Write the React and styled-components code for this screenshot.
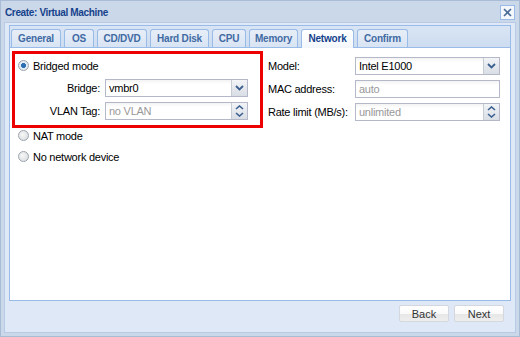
import React from "react";
import styled, { createGlobalStyle } from "styled-components";

const GlobalStyle = createGlobalStyle`
  html, body {
    margin: 0;
    padding: 0;
    width: 520px;
    height: 337px;
    overflow: hidden;
    font-family: "Liberation Sans", Arial, sans-serif;
  }
`;

const tabs = [
  { label: "General", w: 50 },
  { label: "OS", w: 30 },
  { label: "CD/DVD", w: 50 },
  { label: "Hard Disk", w: 59 },
  { label: "CPU", w: 34 },
  { label: "Memory", w: 49 },
  { label: "Network", w: 53 },
  { label: "Confirm", w: 51 },
];

const App = () => {
  return (
    <>
      <GlobalStyle />
      <Window>
        <Header>
          <Title>Create: Virtual Machine</Title>
          <CloseBtn>
            <svg width="11" height="11" viewBox="0 0 11 11">
              <path d="M2 2 L9 9 M9 2 L2 9" stroke="#4a6a96" strokeWidth="1.6" />
            </svg>
          </CloseBtn>
        </Header>
        <Body>
          <TabPanel>
            <TabBar>
              {tabs.map((t) => (
                <Tab key={t.label} $w={t.w} $active={t.label === "Network"}>
                  {t.label}
                </Tab>
              ))}
            </TabBar>
            <Content>
              <Column>
                <Highlight>
                  <RadioRow>
                    <Radio $checked />
                    Bridged mode
                  </RadioRow>
                  <FieldRow>
                    <LeftLabel>Bridge:</LeftLabel>
                    <Field $w={143}>
                      <FieldText>vmbr0</FieldText>
                      <ComboTrigger />
                    </Field>
                  </FieldRow>
                  <FieldRow>
                    <LeftLabel>VLAN Tag:</LeftLabel>
                    <Field $w={143}>
                      <FieldText $empty>no VLAN</FieldText>
                      <SpinTrigger />
                    </Field>
                  </FieldRow>
                </Highlight>
                <RadioRow $plain>
                  <Radio />
                  NAT mode
                </RadioRow>
                <RadioRow $plain>
                  <Radio />
                  No network device
                </RadioRow>
              </Column>
              <RightColumn>
                <FieldRow>
                  <RightLabel>Model:</RightLabel>
                  <Field $w={145}>
                    <FieldText>Intel E1000</FieldText>
                    <ComboTrigger />
                  </Field>
                </FieldRow>
                <FieldRow>
                  <RightLabel>MAC address:</RightLabel>
                  <Field $w={145}>
                    <FieldText $empty>auto</FieldText>
                  </Field>
                </FieldRow>
                <FieldRow>
                  <RightLabel>Rate limit (MB/s):</RightLabel>
                  <Field $w={145}>
                    <FieldText $empty>unlimited</FieldText>
                    <SpinTrigger />
                  </Field>
                </FieldRow>
              </RightColumn>
            </Content>
          </TabPanel>
          <Footer>
            <Button>Back</Button>
            <Button>Next</Button>
          </Footer>
        </Body>
      </Window>
    </>
  );
};

const ComboTrigger = () => (
  <Trigger>
    <svg width="9" height="6" viewBox="0 0 9 6">
      <path d="M1 1 L4.5 4.5 L8 1" stroke="#3b5f8f" strokeWidth="1.8" fill="none" />
    </svg>
  </Trigger>
);

const SpinTrigger = () => (
  <Trigger $spin>
    <svg width="9" height="5" viewBox="0 0 9 5">
      <path d="M1 4 L4.5 1 L8 4" stroke="#3b5f8f" strokeWidth="1.6" fill="none" />
    </svg>
    <svg width="9" height="5" viewBox="0 0 9 5">
      <path d="M1 1 L4.5 4 L8 1" stroke="#3b5f8f" strokeWidth="1.6" fill="none" />
    </svg>
  </Trigger>
);

export default App;

const Window = styled.div`
  width: 520px;
  height: 337px;
  box-sizing: border-box;
  background: #cbd8e9;
  border: 1px solid #a9bcd6;
  display: flex;
  flex-direction: column;
`;

const Header = styled.div`
  height: 21px;
  display: flex;
  align-items: center;
  justify-content: space-between;
  padding: 0 4px 0 4px;
`;

const Title = styled.div`
  font-size: 10px;
  letter-spacing: -0.35px;
  font-weight: bold;
  color: #15428b;
  padding-top: 1px;
`;

const CloseBtn = styled.div`
  width: 15px;
  height: 15px;
  box-sizing: border-box;
  border: 1px solid #99bbe8;
  background: #f4f8fd;
  display: flex;
  align-items: center;
  justify-content: center;
  margin-top: 1px;
`;

const Body = styled.div`
  flex: 1;
  display: flex;
  flex-direction: column;
  background: #dfe8f6;
  border: 1px solid #b9cbe4;
  margin: 0 3px 3px 3px;
  padding: 2px 4px 0 4px;
`;

const TabPanel = styled.div`
  height: 274px;
  display: flex;
  flex-direction: column;
  border: 1px solid #99bbe8;
  background: #fff;
`;

const TabBar = styled.div`
  height: 21px;
  display: flex;
  align-items: flex-end;
  gap: 3px;
  padding: 0 0 0 1px;
  background: linear-gradient(#d9e5f4, #cddcf0);
  border-bottom: 1px solid #99bbe8;
`;

const Tab = styled.div`
  width: ${(p) => p.$w}px;
  box-sizing: border-box;
  text-align: center;
  white-space: nowrap;
  font-size: 10px;
  letter-spacing: -0.2px;
  font-weight: bold;
  line-height: 18px;
  color: ${(p) => (p.$active ? "#15428b" : "#416aa3")};
  background: ${(p) =>
    p.$active ? "linear-gradient(#fff, #f3f7fc)" : "linear-gradient(#e8eef7, #d8e4f4)"};
  border: 1px solid #99bbe8;
  border-bottom: none;
  border-radius: 3px 3px 0 0;
  margin-bottom: ${(p) => (p.$active ? "-1px" : "0")};
  height: ${(p) => (p.$active ? "19px" : "18px")};
`;

const Content = styled.div`
  flex: 1;
  display: flex;
  padding: 3px 0 0 2px;
  font-size: 11px;
  letter-spacing: -0.25px;
  color: #000;
`;

const Column = styled.div`
  width: 254px;
  display: flex;
  flex-direction: column;
`;

const RightColumn = styled.div`
  display: flex;
  flex-direction: column;
  gap: 5px;
  padding: 6px 0 0 2px;
`;

const Highlight = styled.div`
  width: 251px;
  height: 77px;
  box-sizing: border-box;
  border: 3px solid #ec0000;
  padding: 3px 0 0 3px;
  display: flex;
  flex-direction: column;
  gap: 5px;
  margin-bottom: -1px;
`;

const RadioRow = styled.div`
  display: flex;
  align-items: center;
  gap: 4px;
  height: 17px;
  padding-left: ${(p) => (p.$plain ? "6px" : "0")};
  margin-bottom: ${(p) => (p.$plain ? "4px" : "0")};
`;

const Radio = styled.span`
  width: 11px;
  height: 11px;
  box-sizing: border-box;
  border-radius: 50%;
  border: 1px solid #9aa3ad;
  background: ${(p) =>
    p.$checked
      ? "radial-gradient(circle, #2a6fb3 0 2.2px, #e4ebf2 2.8px)"
      : "radial-gradient(circle at 40% 40%, #f7f7f7, #d6d9dd)"};
`;

const FieldRow = styled.div`
  display: flex;
  align-items: center;
  height: 18px;
`;

const LeftLabel = styled.div`
  width: 82px;
  text-align: right;
  padding-right: 5px;
`;

const RightLabel = styled.div`
  width: 87px;
  white-space: nowrap;
`;

const Field = styled.div`
  width: ${(p) => p.$w}px;
  height: 18px;
  box-sizing: border-box;
  border: 1px solid #b5b8c8;
  background: linear-gradient(#f3f3f3, #fff 4px);
  display: flex;
  align-items: stretch;
`;

const FieldText = styled.div`
  flex: 1;
  padding-left: 3px;
  line-height: 16px;
  color: ${(p) => (p.$empty ? "#999" : "#000")};
`;

const Trigger = styled.div`
  width: 15px;
  display: flex;
  flex-direction: column;
  align-items: center;
  justify-content: ${(p) => (p.$spin ? "space-evenly" : "center")};
  background: linear-gradient(#f2f4f7, #d9dee5);
  border-left: 1px solid #c6ccd4;
`;

const Footer = styled.div`
  flex: 1;
  display: flex;
  justify-content: flex-end;
  align-items: flex-start;
  gap: 5px;
  padding: 4px 7px 0 0;
`;

const Button = styled.div`
  width: 50px;
  height: 17px;
  box-sizing: border-box;
  font-size: 11px;
  line-height: 16px;
  text-align: center;
  color: #333;
  border: 1px solid #d4d8de;
  border-radius: 2px;
  background: linear-gradient(#fff 0, #fafafa 50%, #e6e6e6 51%, #eee 100%);
`;
